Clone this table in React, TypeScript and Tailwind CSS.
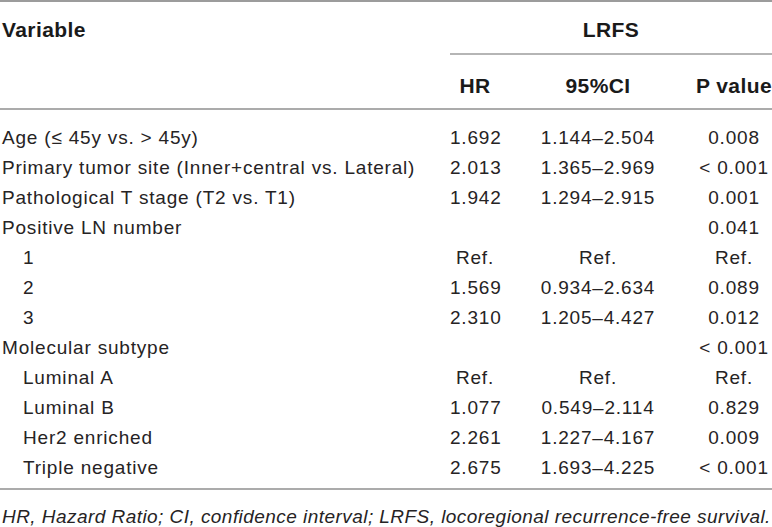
import React from 'react';

type Row = {
  label: string;
  indent?: boolean;
  hr?: string;
  ci?: string;
  p?: string;
};

const rows: Row[] = [
  { label: 'Age (≤ 45y vs. > 45y)', hr: '1.692', ci: '1.144–2.504', p: '0.008' },
  { label: 'Primary tumor site (Inner+central vs. Lateral)', hr: '2.013', ci: '1.365–2.969', p: '< 0.001' },
  { label: 'Pathological T stage (T2 vs. T1)', hr: '1.942', ci: '1.294–2.915', p: '0.001' },
  { label: 'Positive LN number', p: '0.041' },
  { label: '1', indent: true, hr: 'Ref.', ci: 'Ref.', p: 'Ref.' },
  { label: '2', indent: true, hr: '1.569', ci: '0.934–2.634', p: '0.089' },
  { label: '3', indent: true, hr: '2.310', ci: '1.205–4.427', p: '0.012' },
  { label: 'Molecular subtype', p: '< 0.001' },
  { label: 'Luminal A', indent: true, hr: 'Ref.', ci: 'Ref.', p: 'Ref.' },
  { label: 'Luminal B', indent: true, hr: '1.077', ci: '0.549–2.114', p: '0.829' },
  { label: 'Her2 enriched', indent: true, hr: '2.261', ci: '1.227–4.167', p: '0.009' },
  { label: 'Triple negative', indent: true, hr: '2.675', ci: '1.693–4.225', p: '< 0.001' },
];

const cols = 'grid grid-cols-[450px_50px_196px_76px]';

export default function App() {
  return (
    <div
      className="w-[772px] h-[527px] bg-white overflow-hidden text-[19px] text-[#262324]"
      style={{ fontFamily: '"Liberation Sans", Arial, sans-serif' }}
    >
      <div className="border-t-2 border-[#9c9c9c]">
        {/* header */}
        <div className={`${cols} border-b-2 border-[#ababab] font-bold text-[21px] tracking-[0.4px] text-[#1a1a1a]`}>
          <div className="row-span-2 pl-[2px] pt-[15px] leading-[26px]">Variable</div>
          <div className="col-span-3 h-[53px] flex items-center justify-center pt-[5px] border-b-2 border-[#b5b5b5]">
            LRFS
          </div>
          <div className="h-[53px] flex items-center justify-center pt-[8px]">HR</div>
          <div className="h-[53px] flex items-center justify-center pt-[8px]">95%CI</div>
          <div className="h-[53px] flex items-center justify-center pt-[8px] whitespace-nowrap">P value</div>
        </div>

        {/* body */}
        <div className="pt-[13px] pb-[5px] border-b-2 border-[#ababab] tracking-[0.8px]">
          {rows.map((r, i) => (
            <div key={i} className={`${cols} h-[30px] items-center`}>
              <div className={r.indent ? 'pl-[23px]' : 'pl-[2px]'}>{r.label}</div>
              <div className="text-center">{r.hr ?? ''}</div>
              <div className="text-center">{r.ci ?? ''}</div>
              <div className="text-center whitespace-nowrap">{r.p ?? ''}</div>
            </div>
          ))}
        </div>
      </div>

      <p className="mt-[12px] pl-[2px] italic leading-[30px] whitespace-nowrap tracking-[0.45px]">
        HR, Hazard Ratio; CI, confidence interval; LRFS, locoregional recurrence-free survival.
      </p>
    </div>
  );
}
